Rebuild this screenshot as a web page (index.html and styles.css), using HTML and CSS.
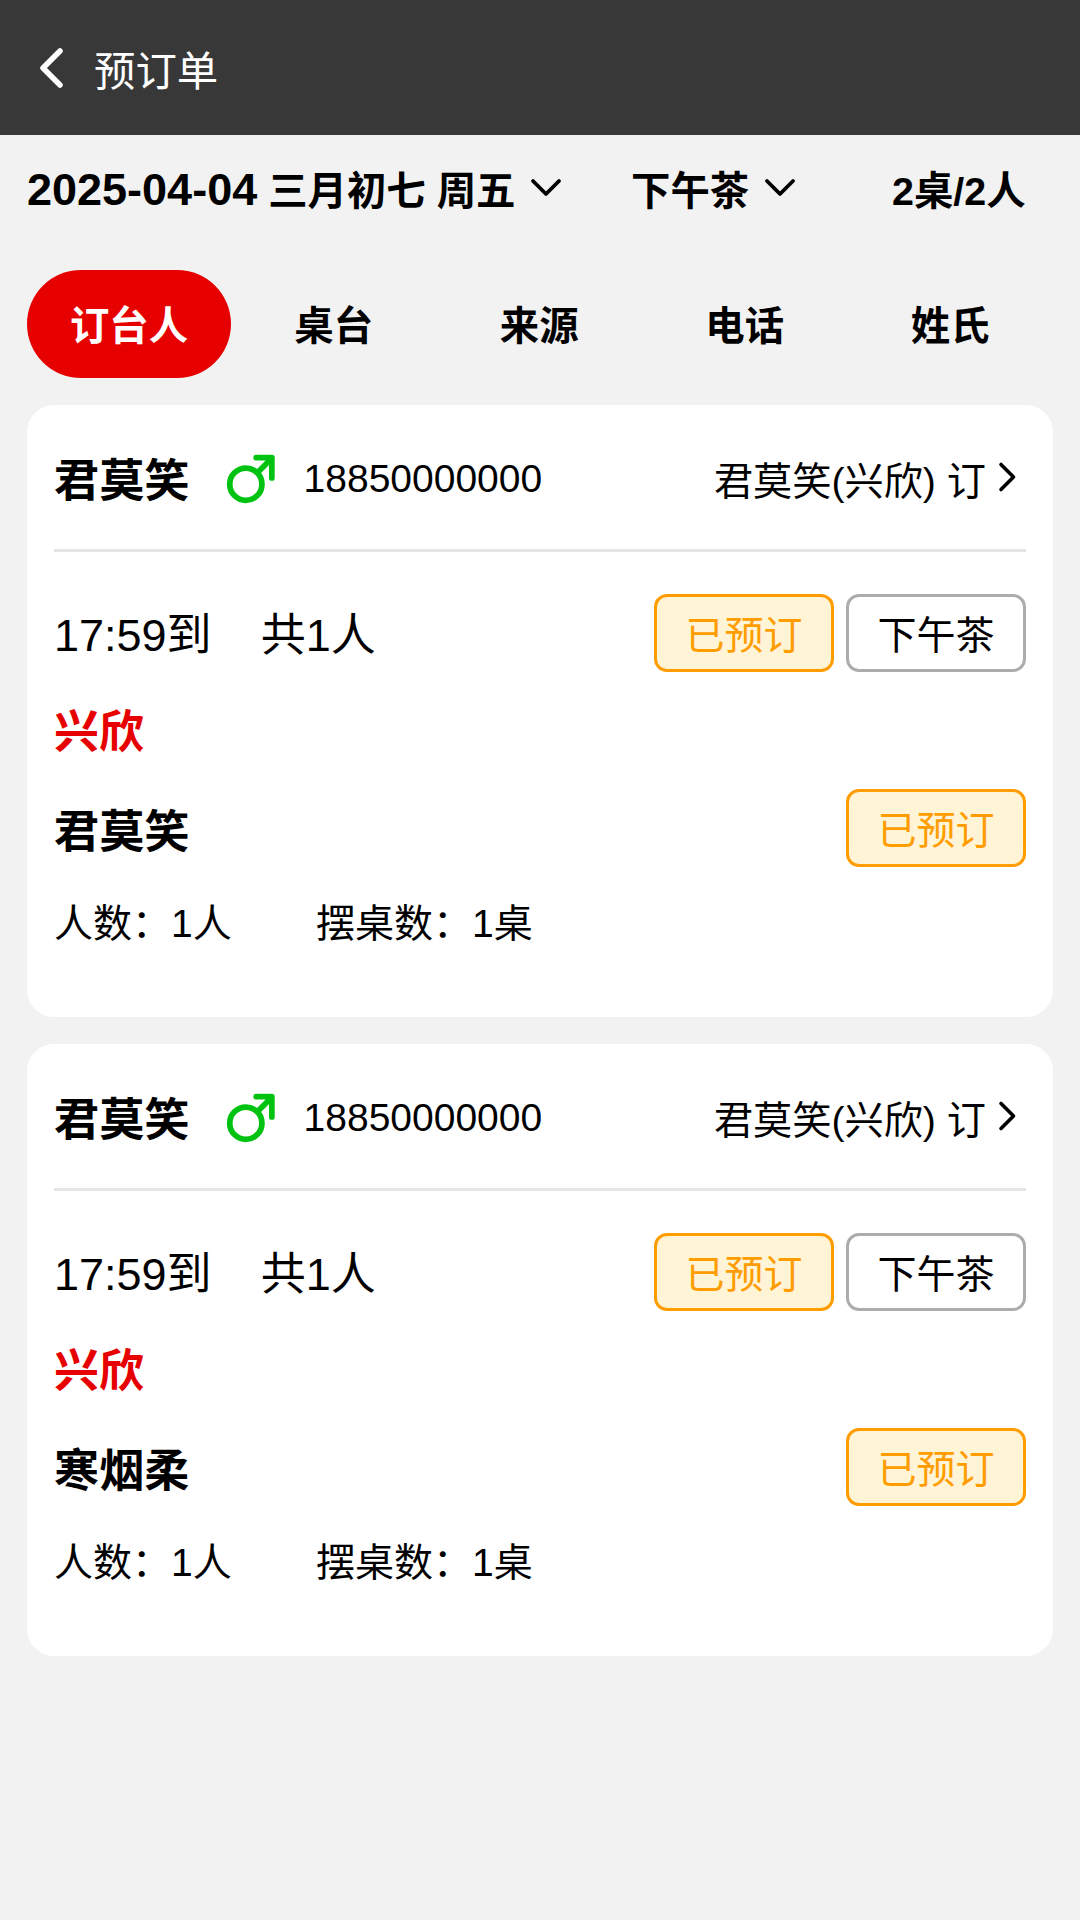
FILE: index.html
```html
<!DOCTYPE html>
<html lang="zh-CN">
<head>
<meta charset="utf-8">
<title>预订单</title>
<link rel="stylesheet" href="styles.css">
</head>
<body>
<header class="topbar">
  <svg class="back" viewBox="0 0 26 42"><path d="M22 4 L5 21 L22 38"/></svg>
  <span class="topbar-title">预订单</span>
</header>
<section class="filters">
  <div class="filter filter-date"><span><span class="date-num">2025-04-04</span> 三月初七 周五</span><svg class="down" viewBox="0 0 32 20"><path d="M3 3 L16 16 L29 3"/></svg></div>
  <div class="filter filter-meal"><span>下午茶</span><svg class="down" viewBox="0 0 32 20"><path d="M3 3 L16 16 L29 3"/></svg></div>
  <div class="filter filter-count">2桌/2人</div>
</section>
<nav class="tabs">
  <div class="tab active">订台人</div>
  <div class="tab">桌台</div>
  <div class="tab">来源</div>
  <div class="tab">电话</div>
  <div class="tab">姓氏</div>
</nav>
<main class="list">
  <article class="card">
    <div class="card-head">
      <span class="name">君莫笑</span>
      <svg class="male" viewBox="0 0 50 50"><circle cx="21" cy="30" r="15.5"/><path d="M32 19 L46 5 M31 4.500 H46 V24"/></svg>
      <span class="phone">18850000000</span>
      <span class="booker">君莫笑(兴欣) 订</span>
      <svg class="more" viewBox="0 0 20 32"><path d="M3 3.500 L15.500 16 L3 28.500"/></svg>
    </div>
    <div class="card-body">
      <div class="row row-time">
        <span class="time">17:59到</span><span class="total">共1人</span>
        <span class="tag tag-orange push">已预订</span><span class="tag tag-gray">下午茶</span>
      </div>
      <div class="source">兴欣</div>
      <div class="row">
        <span class="name">君莫笑</span>
        <span class="tag tag-orange push">已预订</span>
      </div>
      <div class="info"><span class="info-a">人数：1人</span><span>摆桌数：1桌</span></div>
    </div>
  </article>
  <article class="card">
    <div class="card-head">
      <span class="name">君莫笑</span>
      <svg class="male" viewBox="0 0 50 50"><circle cx="21" cy="30" r="15.5"/><path d="M32 19 L46 5 M31 4.500 H46 V24"/></svg>
      <span class="phone">18850000000</span>
      <span class="booker">君莫笑(兴欣) 订</span>
      <svg class="more" viewBox="0 0 20 32"><path d="M3 3.500 L15.500 16 L3 28.500"/></svg>
    </div>
    <div class="card-body">
      <div class="row row-time">
        <span class="time">17:59到</span><span class="total">共1人</span>
        <span class="tag tag-orange push">已预订</span><span class="tag tag-gray">下午茶</span>
      </div>
      <div class="source">兴欣</div>
      <div class="row">
        <span class="name">寒烟柔</span>
        <span class="tag tag-orange push">已预订</span>
      </div>
      <div class="info"><span class="info-a">人数：1人</span><span>摆桌数：1桌</span></div>
    </div>
  </article>
</main>
</body>
</html>
```
FILE: styles.css
```css
* { box-sizing: border-box; }
html, body { margin: 0; padding: 0; }
body {
  width: 1080px;
  min-height: 1920px;
  background: #f2f2f2;
  color: #000;
  font-family: "Liberation Sans", "Noto Sans CJK SC", sans-serif;
}
svg { display: block; flex: none; fill: none; }

.topbar {
  height: 135px;
  background: #383838;
  color: #fff;
  display: flex;
  align-items: center;
  padding-left: 38px;
}
.back { width: 26px; height: 42px; stroke: #fff; stroke-width: 5.5; stroke-linecap: round; stroke-linejoin: round; }
.topbar-title { font-size: 41.4px; margin-left: 30px; }

.filters {
  height: 135px;
  display: flex;
  align-items: center;
  padding: 0 27px 30px;
  font-size: 39.4px;
  font-weight: 700;
}
.date-num { font-size: 45px; }
.filter { display: flex; align-items: center; }
.down { width: 32px; height: 20px; margin-left: 15px; stroke: #000; stroke-width: 3.8; stroke-linecap: round; stroke-linejoin: round; }
.filter-date { width: 604px; }
.filter-meal { width: 261px; }
.filter-count { width: 134px; white-space: nowrap; }

.tabs {
  display: flex;
  padding: 0 27px;
  font-size: 39.4px;
  font-weight: 700;
}
.tab {
  flex: 1;
  height: 108px;
  padding-bottom: 4px;
  display: flex;
  align-items: center;
  justify-content: center;
  border-radius: 54px;
}
.tab.active { flex: 0 0 204px; background: #e60000; color: #fff; }

.list { padding: 27px 27px 0; display: flex; flex-direction: column; gap: 27px; }
.card { background: #fff; border-radius: 27px; padding: 0 27px; height: 612px; }
.card-head {
  height: 147px;
  border-bottom: 3px solid #e5e5e5;
  display: flex;
  align-items: center;
}
.name { font-size: 45.2px; font-weight: 700; }
.male { width: 52px; height: 52px; margin: 4px 0 0 34px; stroke: #00c311; stroke-width: 5.5; stroke-linecap: round; stroke-linejoin: round; }
.phone { font-size: 39px; margin: 3px 0 0 28px; }
.booker { font-size: 39.2px; margin: 2px 0 0 auto; }
.more { width: 20px; height: 32px; margin: 0 8px 0 12px; stroke: #000; stroke-width: 3.6; stroke-linecap: round; stroke-linejoin: round; }

.row { display: flex; align-items: center; height: 78px; }
.row-time { margin-top: 42px; font-size: 45px; padding-bottom: 3px; }
.total { margin-left: 49px; }
.push { margin-left: auto; }
.tag {
  width: 180px;
  height: 78px;
  padding-bottom: 3px;
  border-radius: 13px;
  border: 3px solid;
  display: flex;
  align-items: center;
  justify-content: center;
  font-size: 39px;
}
.row-time .tag { margin-bottom: -3px; }
.tag + .tag { margin-left: 12px; }
.tag-orange { background: #fff4d6; border-color: #ff9d00; color: #ff9d00; }
.tag-gray { background: #fff; border-color: #acacac; color: #000; }
.source { height: 117px; padding-bottom: 4px; display: flex; align-items: center; color: #e60000; font-size: 45px; font-weight: 700; }
.info { margin-top: 29px; line-height: 55px; font-size: 39px; display: flex; }
.info-a { width: 262px; }
```
